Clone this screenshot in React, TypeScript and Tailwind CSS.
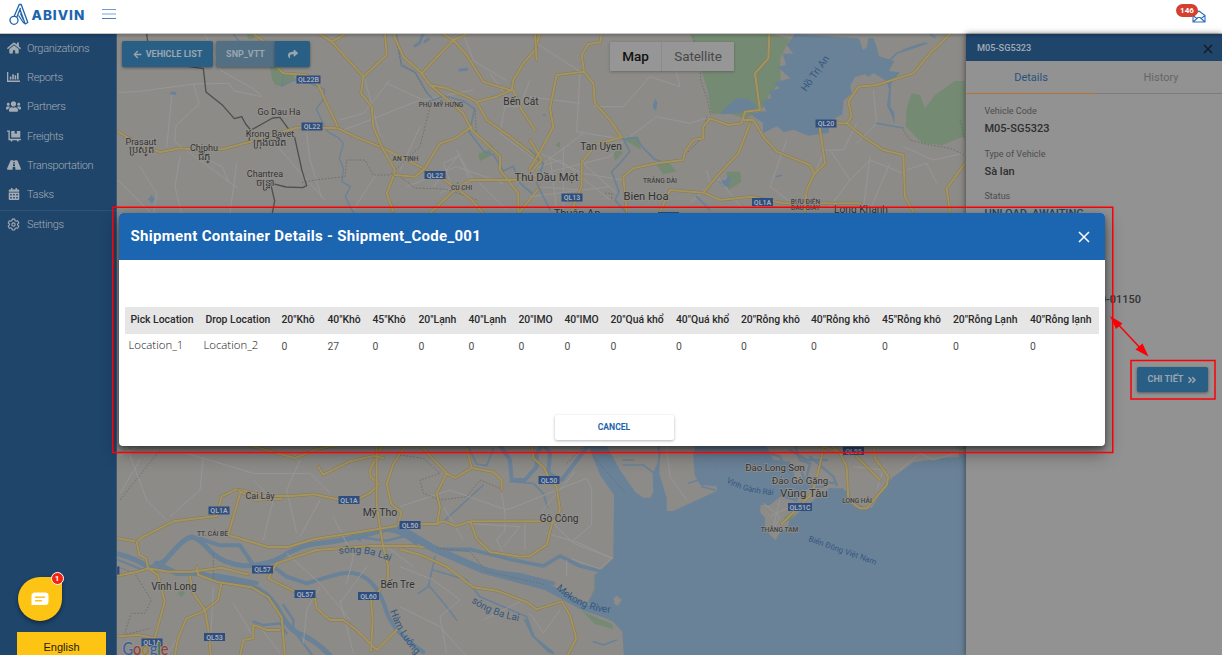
import React from 'react';
import { FaHome, FaUsers, FaDollyFlatbed, FaRoad, FaCalendarAlt, FaShare, FaArrowLeft, FaAngleDoubleRight } from 'react-icons/fa';
import { IoSettingsOutline } from 'react-icons/io5';

const BarChart = () => (
  <svg viewBox="0 0 13 10" className="h-[10px] w-[13px]" fill="currentColor">
    <path d="M0 0h1.3v8.6H13V10H0zM2.8 4.6h1.6v3H2.8zM5.2 2.2h1.6v5.4H5.2zM7.6 3.2h1.6v4.4H7.6zM10 1h1.6v6.6H10z" />
  </svg>
);

const nav = [
  { label: 'Organizations', icon: <FaHome size={14} /> },
  { label: 'Reports', icon: <BarChart /> },
  { label: 'Partners', icon: <FaUsers size={15} /> },
  { label: 'Freights', icon: <FaDollyFlatbed size={14} /> },
  { label: 'Transportation', icon: <FaRoad size={14} /> },
  { label: 'Tasks', icon: <FaCalendarAlt size={12} /> },
  { label: 'Settings', icon: <IoSettingsOutline size={13} className="[&_*]:[stroke-width:44px]" /> },
];

const columns: [string, string][] = [
  ['Pick Location', '0'], ['Drop Location', '0'], ['20"Khô', '0'], ['40"Khô', '27'], ['45"Khô', '0'],
  ['20"Lạnh', '0'], ['40"Lạnh', '0'], ['20"IMO', '0'], ['40"IMO', '0'], ['20"Quá khổ', '0'], ['40"Quá khổ', '0'],
  ['20"Rỗng khô', '0'], ['40"Rỗng khô', '0'], ['45"Rỗng khô', '0'], ['20"Rỗng Lạnh', '0'], ['40"Rỗng lạnh', '0'],
];

const gridCols = 'grid grid-cols-[75px_76px_46px_45px_46px_50px_50px_46px_46px_65.5px_65px_70px_71px_71px_77px_1fr]';

const Roads = ({ d }: { d: string }) => (
  <>
    <path d={d} fill="none" stroke="#877a56" strokeWidth={9} strokeLinejoin="round" strokeLinecap="round" />
    <path d={d} fill="none" stroke="#a39461" strokeWidth={6} strokeLinejoin="round" strokeLinecap="round" />
  </>
);
const Minor = ({ d }: { d: string }) => <path d={d} fill="none" stroke="#979799" strokeWidth={3} strokeLinejoin="round" />;
const Stream = ({ d, w = 4 }: { d: string; w?: number }) => (
  <path d={d} fill="none" stroke="#6a8298" strokeWidth={w} strokeLinejoin="round" strokeLinecap="round" />
);
const Dots = ({ d }: { d: string }) => <path d={d} fill="none" stroke="#6f6f6f" strokeWidth={3} strokeDasharray="5 5" />;

const shields: [string, number, number][] = [
  ['QL22B', 308.5, 79.5], ['QL22', 312, 126.5], ['QL22', 435, 175], ['QL13', 572, 197.5], ['QL1A', 762.5, 202],
  ['QL20', 826, 123.5], ['QL50', 549, 480], ['QL50', 410, 525], ['QL1A', 349, 500], ['QL1A', 219, 510.5],
  ['QL57', 262.5, 569.5], ['QL57', 305, 594], ['QL60', 368.5, 596], ['QL53', 214.5, 637], ['QL1A', 152, 642.5],
  ['QL51C', 800, 507], ['QL55', 853.5, 451], ['', 668.5, 216], ['', 782, 442], ['', 109, 570.5],
];

const places: [string, number, number, number][] = [
  ['Go Dau Ha', 279, 115, 9], ['Krong Bavet', 270, 137, 9], ['ក្រុងបាវិត', 269, 146, 10], ['Prasaut', 141, 144.5, 9],
  ['ប្រសូត', 141, 153, 10], ['Chiphu', 204, 151, 9], ['ជីភូ', 204, 160, 10], ['Chantrea', 265, 177, 9], ['ចន្ទ្រា', 265, 186, 10],
  ['Bến Cát', 521, 105, 10.2], ['Tan Uyen', 601, 149.5, 10.2], ['Thủ Dầu Một', 546.5, 180.5, 11.2],
  ['Bien Hoa', 646, 199.5, 11.2], ['Long Khanh', 861, 213, 10.2], ['Thuận An', 577, 217, 11],
  ['Cai Lậy', 260, 499, 9], ['Mỹ Tho', 380, 515.5, 10.5], ['Gò Công', 559, 521.5, 10.2], ['Vĩnh Long', 174, 589.5, 10.2],
  ['Bến Tre', 397.5, 587.5, 10.2], ['Đảo Long Sơn', 775, 470.5, 9.6], ['Đảo Gò Găng', 800, 484, 9.6], ['Vũng Tàu', 804, 497, 11.5],
];
const districts: [string, number, number][] = [
  ['PHÚ MỸ HƯNG', 441, 107], ['AN TỊNH', 405.5, 161], ['CỦ CHI', 461.5, 190], ['TRẢNG DÀI', 660, 183],
  ['BƯU ĐIỆN', 805.5, 203.5], ['DẦU GIÂY', 805.5, 210], ['TT. CÁI BÈ', 212.5, 535.5], ['LONG HẢI', 857, 503], ['THẮNG TAM', 779.5, 532],
];

function MapView() {
  return (
    <svg viewBox="117 34 849 621" className="h-[621px] w-[849px] font-[Roboto,'Noto_Sans',sans-serif]">
      <rect x="117" y="34" width="849" height="621" fill="#8d8b87" />
      <g transform="translate(110 30) scale(.33333)">
        <path d="M480 112l20-8 25 28 22-4 8 18-22 14-14 10-24-6-10-22zM410 12h30l-8 14-16 2z" fill="#758a73" />
        <path d="M1105 372l34-14 6 18-36 18z" fill="#758a73" />
        <Minor d="M24 188L90 184 250 162 358 160 370 182 454 200M186 192l-16 160M250 162l18 60-70 65-4 48 190 140M276 380l60 30 22 50M210 380l-15 90 20 80M380 400l-20 150M285 12l48 110 90 50 32 25M495 340l60 70 90 100M590 310l10 80 34 110M690 270l70-20 80-100M760 130l50 190M700 300l80-30 150-60M830 160l110 50 150-30M870 420l60-130M1040 360l40 90-90 40M970 470l80-100M890 470l150-60 140 50M1140 130l50 70-20 110 120 90M1060 12l30 80 100 60M1180 230h50l30-80M1040 380l-40 20 30 80 60-30-40-70M800 430l-70 110M1100 450l90 90M24 450l100 100M90 410l50 80-10 70" />
        <Stream d="M370 12l50 62 20 4 22-12 60 66-8 36 50-22 80 32-5 32-20 26 18 40 15 28 34 20 14 16-12 45 12 30-4 40 25 15-15 30 20 40 20 28" />
        <Stream d="M915 48l14-10 10-26M945 35l10-8M1050 120l20-2M185 190h10M118 508h12M125 500v14" w={9} />
        <Stream d="M860 12l14 95 42 20 34 60 20 24 30-14 60 16 34 24-16 70 46 60 26 6 30 50 30-14 20 50 40 35" w={5} />
        <Dots d="M860 40l14 60 42 30 35 60M960 230l-30 120-90 85-50 0-25-45-55 0-5 50-90 10-40 8M1095 240l4 70 50 42M870 440l45 34 90 3 100 34" />
        <path d="M110 12l8 60 120 38 42 6 8 70 50 40 35 40 22-6 12 22 15 18-6 40M420 302l68-38 22-2 44 60 22 100 14 45-12 6-50-2-40-10-8-8 14 60-8 42" fill="none" stroke="#4f4f50" strokeWidth={4} strokeLinejoin="round" />
        <Roads d="M24 305L75 335l75 32 60-12 60 5 70-3 100-27 60-20 60-17h80l45 2 55 27 70 28 50 25 80 40 50 25 50 35 45 35 35 40" />
        <Roads d="M430 12l50 33 20 65 20 20 70 5 35 30 25 55 33 70M630 12l35 23 95 105 70-65-5-63M665 35l40-23M760 140l-7 50 32 40 5 60 25 60 40 70-5 20-20 50 20 55" />
        <Roads d="M850 12l30 68 55 50 25 35 50 10 60 25 30 15 30 55 70 50 90 70M960 165l100 85 25 50 55 50 30 30v40l55 70v55M935 130l95-100 40 45 50 80 30 10 50 15M1000 12l30 18 40-18M1100 215l60-15 45-20 5-30 30-50 35-40 15-48M1210 180l25 60 40 60M855 435l60 5 30-25 45-75 45-15 50-35M1040 475l40-25h100l110-2M1040 475l-80 75M1290 470l-60 75" />
      </g>
      <g transform="translate(530 30) scale(.33333)">
        <path d="M480 12h240l60 14-30 60 2 70-36 40-8 30-60 40-45-15-60 0-10-70-22-70-15-60zM1130 235l15-45 25 5 15 40 30-40 60-42h30v165l-70 28-60-8-48-50z" fill="#758a73" />
        <path d="M275 325l50-5 8 40zM250 360l30 5-25 28zM380 405l30-15 30 35-40 8zM590 425l40 0 5 30-40 25zM75 345l16-12-2 20z" fill="#758a73" />
        <path d="M795 12l-25 33 20 26-32 0 10 34-25 6 38 34-50 14 18 16-30 8 4 20-28 14 14 26-50 8 40 28v30l42-20 20 18 30-8 44 18 60-8 6-36 36-20 4-42 24-20-4-24 14-26 30-8 10 8 16-12 38 24 8 24-6 50 12 24 10 30 0-34-12-16 2-70 26-34-32-4 16-30-46-14-6-24-10-30-16 0-4 26-12 10-12-36zM588 230l32-25 35 2 25 20-10 14-60 10-40 2z" fill="#6a8298" />
        <path d="M566 455l22-6 8-12 10 8-10 12 4 12-20 2-6-8zM368 225l8-18 6 10-4 26-8-8z" fill="#6a8298" />
        <Minor d="M20 40l130 85M150 125l-10 180 120 20M0 200l150 20M190 230l90 0 80-90 90 30-20-80 90-50M300 320l80-60 100 20 60-20M30 370l130 60 120 20M0 440l240-60 50-60M60 380l20 160M100 350l0 190M0 420l90-30 150 120M160 400l100 90M0 500l240-30M480 520l60-60-10-40M560 440l80 100M770 330l-50 140 80 60M880 360l60 0 40-80M880 370l-60 140M900 360l60 90 60-60 100 40M960 450l-60 80M1020 380l-20 160M1080 400l-60 140M1120 350l90 40 90-20M1130 420l60-20 30 60M1030 180l10 100-60 60M40 400l120-90M20 470l130 10" />
        <Stream d="M0 360l40 40-20 60 40 80M280 328l38-6 20 30 36 36 25 8 60-8M280 328l20 36-30 36-25 25 22 60-12 25 40 45M500 500l40 40M740 440l14-4M40 255h5M1040 280l80 14M1200 12l15 10M1070 100l30-30 90-30M1120 60l60-20" w={5} />
        <Dots d="M490 20l20 70 2 60 20 60 10 45M530 260l-10 60-50 50M225 490h20v18M1120 300l20 30 60 15 60 10 45 20M1290 270l15 60" />
        <Roads d="M215 12l-5 25-35 5-20 33 7 50 28 35 5 60 45 50 35 52-75 20-45 55v70l-30 75M162 125l-82 10-20 100 10 55-40 75-30 50M0 330l35 60-35 40M20 90l-5-78" />
        <Roads d="M718 12l-3 73-40 45 15 110-45 5-10 35-40 5-55-20-20 25v35l-30 5-25 35-5 25-80 10-70 15-30 25 10 105M640 270h30l30 50 40 45 50 20 50 20 13 27-23 48-5 65M660 280l-35 90-65 70-40 48M390 545l30-65 100 8 50 22 95-10 95 20h230M853 432l32-32-15-100 0-20M920 280h30l15-20-10-45 30-45 55-5 110-35 50-60 60-58M950 280l50 40 60 40 60 15 5 125 25 45M1305 400l-55 75 10 70" />
      </g>
      <g transform="translate(400 440) scale(.33333)">
        <path d="M560 0l22 60 18 45 42 60-2 190-38 36-18 14 0 45-20 35 25 35 50 25 28 30 5 80H1700V0z" fill="#6a8298" />
        <path d="M610 0l50 90 45 65 25 18h22l8-18-2-55 20-40-10-60zM780 0l-2 100 22 75v38h20l130-60v-14l-50-4-16-30-4-60 10-45zM640 475l10-8 16 12-12 18-10-4zM545 500l25 20 75 40 22 30 3 80h-150z" fill="#8d8b87" />
        <path d="M545 512l40 40 54 15-2-15-50-20zM585 400l-2 45-10 20 12-10z" fill="#758a73" />
      </g>
      <g transform="translate(680 440) scale(.33333)">
        <path d="M250 0l30 60 50 5 20 60 50 10-40 30-10 20-50-15-30 25-28 0-2 20 15 20v30l20 25 12 10 10-18 25-20 8-22 100-85 20-12 50 10 20 32 35 18 20 0 12-20 22-42 30-30 62-44 54-8 20-5 62-2V0z" fill="#8d8b87" />
        <path d="M310 235l20-15 15 12-20 12zM815 0h43v38l-30-12z" fill="#758a73" />
        <Stream d="M240 30l60 20 20 40 40-10 20 60 50 0M340 0l20 60 30 10-10 40 80 20M190 20l60 20M390 50l70 60 10 25M330 30l50 30 60 0" w={7} />
        <path d="M60 0h50v110l-6-30-20-25zM190 10l60 0 10 30-60 10zM450 145l40 0 20 40-30-4-30 5z" fill="#6a8298" />
        <Minor d="M250 190l50 40-20 40M270 230l60-30M660 90l60-50 40 20 98-30M590 150l20-60-90-10M300 180l-20 80" />
        <Roads d="M480 40l20 40 5 100 35 25h20l60-70 5-25-40-55-5-40M480 40l-30-28M530 50l50 50 20 20M430 12l-5 40-20 80-10 30-90 90M410 12l80 30" />
      </g>
      <g transform="translate(0 440) scale(.33333)">
        <Stream d="M354 342q60 15 90 40 20 14 40-8l40-45q30-34 50-38 20 0 60 46 40 36 100 40 60 0 104-22 60-40 120-45 90-10 200-42 40 0 90 40" w={15} />
        <Stream d="M470 370l60 30q80-4 100 10 60 16 90 20 70 10 110 70 30 60 60 78 60 20 120 90" w={16} />
        <Stream d="M600 296l60 20 60 0 40 60M640 405l60 10 70 14M820 380l40 30 60 20 80-24q60-20 100 10 40 30 60 100 20 60 110 120" w={12} />
        <Stream d="M850 495l30 45 0 30 60 80M490 360l-60 30-75-30M760 545l30 10 50-5 20 30M1080 292l80 10 80-20M1050 280l30 20" w={7} />
        <Minor d="M354 50l60-30M380 20l60 160 60 60M610 50l-10 100-90 80M760 120l60 60-30 120M900 60l-40 90 30 130M960 180l-60 110M560 40l200 60 170 0 60 60M1000 230l60 120-20 80M560 540l-60 110M700 490l60 100M420 60l-60 100M860 340l100 90 90 110M960 440l-40 70-10 100M640 440l-10 200M780 560l60 80M1160 320l80 60M1100 380l-80 110M1020 480l40 160" />
        <Dots d="M360 180l120-150M640 340l0 80M354 380l50 20 50 80-20 40-40 0-20 60M370 585l80-20" />
        <Roads d="M354 295l56 10 20-15 90-46 130-16 14-58 44-22 24 4 60 16 80 0 70-5 70 15 60 0 40-20 25-26-25-22-2-20 30-60 20-30M655 120" />
        <Roads d="M722 155l-38 130 120 36 60 0 80-24 130-20 120-20 10-40-30-25-14-60 20-60 40-60M735 12l70 20 80 22 70-28 70-14M955 80l15 24 80-40 70-16 30 6M1130 12v180l10 70 10 60 15 60-2 40-50 60 5 60-5 90M715 150l50 30 80-4M410 305l8 40 20 10 6 30-30 10-40 8-20 4M444 385l60 10 70 0 90-12 60 16 20 4M590 380l5 25 60 22 100 15 50 30 40 60 10 120M444 385l30 20 20 80-30 110-50-10-60 4M664 430l-10 50-45 35-50 20-25 60-10 55M570 410l10 50 35 50 10 60 8 80M830 370l-25 45 80 40 60 20 5 30 40 35 40 0 40 30 60 60 60-60M830 370l120-40 160-12 130 0 100 10M720 650l10-50 30-5 0-40 40 15 40 0" />
        <path d="M532 460l14-10 10 8-12 14z" fill="#758a73" />
      </g>
      <g transform="translate(400 440) scale(.33333)">
        <Stream d="M0 265l100 60 150 65 190 50 110 60 120 40" w={22} />
        <Stream d="M110 328l100 0 120 30 100 20 50-30 60 30 60 14" w={11} />
        <Stream d="M140 340l100 50 120 15 100 25M290 0l40 60 5 60 40 0 35-40 0-40 20-28 20 28-5 60 40 20 100-130" w={12} />
        <Stream d="M200 12l30 60 30 5 20-50M130 245l120-110M330 125l70 5 30 30 12 40M90 440l50 60 30 40M105 350l-20 90-30 20M100 390l100 30 40 50 140 60 20 60 60 50M650 600l-40 15-30-10" w={5} />
        <Stream d="M670 75l60 0 40 30 10-70M865 130l60-20-20 30 40 10M700 60l-30 0" w={5} />
        <path d="M370 535l15 5 20 50 50 40 10 12-20-4-50-50z" fill="#6a8298" />
        <Minor d="M0 200l150-50 170 60 240-95 15 30 0 110-60 50-90-90 100-120M305 160l10 60 0 50-25 30 20 40M200 250l160 10-50 60M375 240l0 90M440 280l100 30 95 45-35 32-85-30M520 310l120 45M500 360l0 50M130 200l60 100M0 500l120 60 80 90M250 540l120-60M390 520l40 60 50-70M800 20l10 90 50 70M0 380l100 40 80 60-60 50 20 110" />
        <Dots d="M0 45l70 10 50 45-60 20 10 40 50 20 80-10 40-50 60 25M580 50l95 108M110 325l100 10 50 60 180 40M500 70l60-60" />
        <Roads d="M65 20l75 80-30 60 10 40-8 50 20-6 35 14 45-14 200 0 48 2 20-36-10-70-20-20-20-40-30-25-5-40M140 100l25 14 50-30-15-60M215 84l65 12 25 24 0 30M212 246l18 50 40 40 90 14 30-2 50-34 18-70M60 252h54M0 328l60 16 80 36 80 62 70 10 90 34 30 22 75-24 24 40 20 70-25 50" />
      </g>
      {shields.map(([t, x, y], i) => (
        <g key={i}>
          <rect x={x - (t.length > 4 ? 12 : 10.5)} y={y - 4} width={t.length > 4 ? 24 : 21} height="8" fill="#2e4e80" />
          {t && <text x={x} y={y + 2.7} fontSize="7" fontWeight="600" fill="#aab0ba" textAnchor="middle">{t}</text>}
        </g>
      ))}
      {places.map(([t, x, y, s], i) => (
        <text key={i} x={x} y={y} fontSize={s} fill="#313131" textAnchor="middle" stroke="#959390" strokeWidth="1.5" paintOrder="stroke">{t}</text>
      ))}
      {districts.map(([t, x, y], i) => (
        <text key={i} x={x} y={y} fontSize="6.6" fontWeight="500" fill="#404040" textAnchor="middle" stroke="#959390" strokeWidth="1" paintOrder="stroke">{t}</text>
      ))}
      <g fill="#33577f" fontSize="10">
        <defs>
          <path id="lai1" d="M339 554q26-4 50 7" />
          <path id="lai2" d="M471 602q22 16 54 20" />
          <path id="mekong" d="M556 589q23 22 56 24" />
          <path id="ham" d="M390 611q9 27 30 48" />
          <path id="ganh" d="M726 482q20 12 50 13" />
        </defs>
        <text transform="translate(806 92) rotate(-55)" fontSize="10">Hồ Trị An</text>
        <text><textPath href="#lai1">sông Ba Lai</textPath></text>
        <text><textPath href="#lai2">sông Ba Lai</textPath></text>
        <text><textPath href="#mekong">Mekong River</textPath></text>
        <text><textPath href="#ham">Hàm Luông</textPath></text>
        <text fontSize="8"><textPath href="#ganh">Vịnh Gành Rái</textPath></text>
        <text transform="translate(808 541) rotate(19.5)" fontSize="8">Biển Đông Việt Nam</text>
      </g>
      <text x="122.5" y="655" fontSize="16.5" fontFamily="Lato" fontWeight="500" stroke="#98979a" strokeWidth="1.5" paintOrder="stroke" textLength="46" lengthAdjust="spacingAndGlyphs">
        <tspan fill="#3c5f99">G</tspan><tspan fill="#983a32">o</tspan><tspan fill="#9d8022">o</tspan><tspan fill="#3c5f99">g</tspan><tspan fill="#346e44">l</tspan><tspan fill="#983a32">e</tspan>
      </text>
    </svg>
  );
}

const Field = ({ label, value, blue }: { label: string; value: string; blue?: boolean }) => (
  <div className="h-[42.5px]">
    <div className="h-[14px] text-[9px] leading-[14px] text-[#4c4c4c]">{label}</div>
    <div className={'mt-[3px] h-[16px] text-[11px] font-medium leading-[16px] ' + (blue ? 'text-[#274866]' : 'text-[#2e2e2e]')}>{value}</div>
  </div>
);

export default function App() {
  return (
    <div className="relative flex h-[655px] w-[1222px] flex-col overflow-hidden bg-white font-[Roboto,'Noto_Sans',sans-serif]">
      <header className="flex h-[34px] shrink-0 items-start justify-between bg-white">
        <div className="flex items-start pl-[9px]">
          <svg viewBox="0 0 20 22" className="mt-[3px] h-[22px] w-[20px]" fill="none" stroke="#1d64ae" strokeWidth="1.3" strokeLinejoin="round">
            <circle cx="5" cy="17.3" r="4" />
            <path d="M5.2 13.3L10.2 1.5h2L18.8 19.5l-2.6 1.5L11 6.5M7.8 14.3L11.5 5M9.6 12.500L14.3 19.5l2.3 1.5M11.5 10.5l2.8 6" />
          </svg>
          <span className="ml-[2.5px] mt-[5px] w-[54px] font-[Inter,sans-serif] text-[13.5px] font-extrabold leading-[20px] tracking-[1px] text-[#1d64ae]">ABIVIN</span>
          <div className="ml-[16.5px] mt-[9px] flex h-[10px] w-[14px] flex-col justify-between">
            <i className="h-px bg-[#6f9bd0]" />
            <i className="h-[2px] bg-[#bdd2ea]" />
            <i className="h-px bg-[#4a80c0]" />
          </div>
        </div>
        <div className="relative mr-[16px] mt-[3px] h-[21px] w-[30px]">
          <svg viewBox="0 0 14 13" className="absolute right-0 top-[7px] h-[13px] w-[14px]" fill="none" stroke="#2f70bd" strokeWidth="1.1" strokeLinejoin="round">
            <path d="M1 5.5L7 1l6 4.5V12H1zM1 5.5l4 3.2M13 5.5L9 8.7M1 12l5-4.5h2l5 4.5" />
          </svg>
          <span className="absolute left-0 top-[1px] flex h-[13px] w-[22px] items-center justify-center rounded-full bg-[#d4402f] text-[8px] font-bold text-white">146</span>
        </div>
      </header>
      <div className="flex h-[621px]">
        <aside className="flex w-[117px] shrink-0 flex-col border-r border-[#3c5974] bg-[#1f456b] text-[#a3abb3]">
          {nav.map((n, i) => (
            <div key={n.label} className={'flex h-[29.33px] shrink-0 items-center text-[11px] tracking-[-0.34px]' + (i === 6 ? ' border-t border-[#2c5379]' : '')}>
              <span className="-mt-[2px] flex w-[27px] justify-center">{n.icon}</span>
              <span className="pt-[0.5px] font-light">{n.label}</span>
            </div>
          ))}
          <div className="mt-auto flex flex-col pl-[17px]">
            <div className="relative ml-[0.5px] flex h-[44px] w-[44px] items-center justify-center rounded-full rounded-tr-[5px] bg-[#fdc414] shadow-[0_2px_4px_rgba(0,0,0,0.45)]">
              <svg viewBox="0 0 18 14" className="h-[14px] w-[18px]">
                <path d="M4 .5h10q3.5 0 3.5 3v6.5q0 3-3.5 3H.5V4Q.5.5 4 .5z" fill="#fff" />
                <path d="M4 5.2h10M4 8.7h7" stroke="#fdc414" strokeWidth="1.4" />
              </svg>
              <span className="absolute -right-[2px] -top-[5px] flex h-[13px] w-[13px] items-center justify-center rounded-full border-[1.5px] border-white bg-[#f5220f] text-[8px] font-bold text-white">1</span>
            </div>
            <div className="mt-[11px] h-[23px] w-[89px] bg-[#fdc414] pt-[8px] text-center font-['Liberation_Sans',sans-serif] text-[11px] leading-[15px] text-[#1f1c10]">English</div>
          </div>
        </aside>
        <main className="relative w-[849px] shrink-0">
          <MapView />
          <div className="absolute left-[5px] top-[7px] flex text-[9px] font-bold text-[#9aa6af]">
            <button className="flex h-[26px] w-[91px] items-center justify-center gap-[4px] rounded-[2px] bg-[#2a5f85] pt-[1px] shadow-[0_1px_3px_rgba(0,0,0,0.4)]"><FaArrowLeft size={9} />VEHICLE LIST</button>
            <button className="ml-[3px] flex h-[26px] w-[59px] items-center justify-center rounded-l-[2px] bg-[#526f84] pt-[1px] shadow-[0_1px_3px_rgba(0,0,0,0.4)]">SNP_VTT</button>
            <button className="flex h-[26px] w-[35px] items-center justify-center rounded-r-[2px] bg-[#2a5f85] shadow-[0_1px_3px_rgba(0,0,0,0.4)]"><FaShare size={10} /></button>
          </div>
          <div className="absolute left-[493px] top-[8px] flex h-[29px] w-[124px] rounded-[1px] bg-[#969696] text-[13.5px] shadow-[0_1px_3px_rgba(0,0,0,0.25)]">
            <span className="flex w-[52px] items-center justify-center border-r border-[#8b8b8b] font-medium text-[#111]">Map</span>
            <span className="flex flex-1 items-center justify-center tracking-[-0.1px] text-[#484848]">Satellite</span>
          </div>
        </main>
        <section className="relative w-[256px] shrink-0 bg-[#929292] shadow-[0_0_6px_rgba(0,0,0,0.55)]">
          <div className="flex h-[27px] items-center justify-between bg-[#1f456b] pl-[11px] pr-[9px] text-[9.2px] font-medium text-[#a2adb7]">
            <span>M05-SG5323</span>
            <svg viewBox="0 0 10 10" className="mt-[2px] h-[10px] w-[10px]" stroke="#151b22" strokeWidth="1.5"><path d="M1 1l8 8M9 1L1 9" /></svg>
          </div>
          <div className="flex h-[32px] text-center text-[11px] leading-[33px]">
            <span className="w-[130px] text-[#27537e]">Details</span>
            <span className="flex-1 pl-[4px] text-[#666]">History</span>
          </div>
          <div className="flex h-px">
            <i className="w-[130px] bg-[#b57433]" />
            <i className="flex-1 bg-[#7c7c7c]" />
          </div>
          <div className="pl-[18.5px] pt-[10px]">
            <Field label="Vehicle Code" value="M05-SG5323" />
            <Field label="Type of Vehicle" value="Sà lan" />
            <Field label="Status" value="UNLOAD_AWAITING" blue />
          </div>
          <div className="mt-[59px] pr-[81px] text-right text-[11px] font-medium leading-[18px] text-[#333]">0-01150</div>
          <button className="ml-[171px] mt-[58px] flex h-[25px] w-[71px] items-center justify-center gap-[4px] rounded-[2px] bg-[#2a5f85] pt-[1px] text-[9px] font-bold text-[#9aa6af] shadow-[0_1px_3px_rgba(0,0,0,0.4)]">CHI TIẾT <FaAngleDoubleRight size={10} /></button>
        </section>
      </div>
      <div className="pointer-events-none absolute left-0 top-[33px] h-[5px] w-full bg-gradient-to-b from-black/25 to-transparent" />

      <div className="absolute left-[119px] top-[213px] flex h-[233px] w-[986px] flex-col rounded-[4px] bg-white shadow-[0_7px_18px_rgba(0,0,0,0.42),0_3px_5px_rgba(0,0,0,0.35)]">
        <div className="flex h-[47px] shrink-0 items-center justify-between rounded-t-[4px] bg-[#1b65b1] pl-[11.5px] pr-[15px] text-white">
          <h2 className="text-[15px] font-bold tracking-[0.31px]">Shipment Container Details - Shipment_Code_001</h2>
          <svg viewBox="0 0 12 12" className="h-[12px] w-[12px]" stroke="#fff" strokeWidth="1.5"><path d="M1 1l10 10M11 1L1 11" /></svg>
        </div>
        <div className="mx-[6px] mt-[47px]">
          <div className={gridCols + ' h-[27px] items-center whitespace-nowrap bg-[#e6e6e6] pl-[5.4px] text-[10.4px] font-medium text-[#2a2a2a]'}>
            {columns.map(([h]) => <span key={h} className="-mt-[1px]">{h}</span>)}
          </div>
          <div className={gridCols + ' h-[26px] items-center whitespace-nowrap pl-[5.4px] text-[10.4px] text-[#505050]'}>
            {columns.map(([h, v], i) =>
              i < 2 ? (
                <span key={h} className="-ml-[2px] -mt-[4px] font-['Open_Sans',sans-serif] text-[11.4px] font-light text-[#111]">{i === 0 ? 'Location_1' : 'Location_2'}</span>
              ) : (
                <span key={h}>{v}</span>
              ),
            )}
          </div>
        </div>
        <button className="mx-auto mb-[6px] mt-auto h-[25px] w-[119px] translate-x-[2px] rounded-[2px] bg-white text-[8.6px] font-bold text-[#1b65b1] shadow-[0_1px_3px_rgba(0,0,0,0.3)]">CANCEL</button>
      </div>
      <svg viewBox="0 0 1222 655" className="pointer-events-none absolute inset-0 h-[655px] w-[1222px]" fill="none" stroke="#fb0007" strokeWidth="1.5">
        <rect x="112.75" y="207.25" width="1000" height="245.25" />
        <rect x="1131" y="360.5" width="84" height="38.5" />
        <path d="M1115 321l28 30" />
        <path d="M1110 316l12.5 7.5-6.5 5.5zM1148.5 356.5l-13-7 7-6z" fill="#fb0007" stroke="none" />
      </svg>
    </div>
  );
}
